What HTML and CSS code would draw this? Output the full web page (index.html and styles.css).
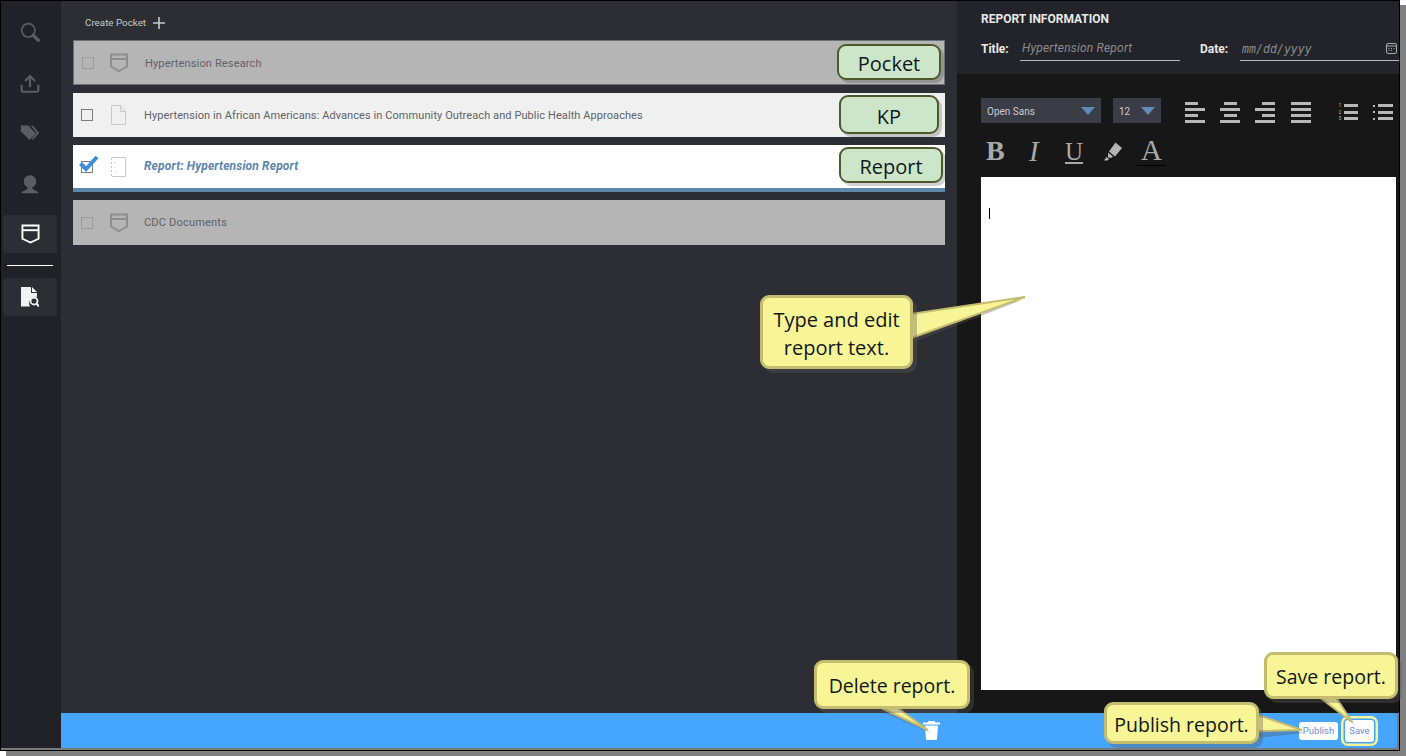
FILE: index.html

```html
<!DOCTYPE html>
<html lang="en">
<head>
  <meta charset="UTF-8" />
  <meta name="viewport" content="width=device-width, initial-scale=1" />
  <title>Report Information</title>
  <link rel="stylesheet" href="styles.css">
</head>
<body>
  <div class="window">
    <nav class="sidebar">
      <a class="nav-item">
        <svg width="20" height="20" viewBox="0 0 24 24" fill="none" stroke="#5a5d63"><circle cx="10" cy="10" r="8" stroke-width="2"/><path d="M16 16 22 22" stroke-width="4" stroke-linecap="round"/></svg>
      </a>
      <a class="nav-item">
        <svg width="20" height="20" viewBox="0 0 24 24" fill="none" stroke="#5a5d63" stroke-width="2.6"><path d="M12 17V4M6 9.500 12 3.500 18 9.500"/><path d="M2 14v7a1.500 1.500 0 0 0 1.500 1.500h17A1.500 1.500 0 0 0 22 21v-7"/></svg>
      </a>
      <a class="nav-item">
        <svg width="20" height="20" viewBox="0 0 24 24" fill="#5a5d63"><path d="M1 3h9l9 9.500-7.500 8L1 10z"/><path d="M13 3h2.500L23 12l-7.500 8.500-1.500-1.500 6-7z"/></svg>
      </a>
      <a class="nav-item">
        <svg width="20" height="20" viewBox="0 0 24 24" fill="#5a5d63"><circle cx="12" cy="9" r="7.500"/><path d="M9 15h6v3l7 3.500V23H2v-1.500l7-3.500z"/></svg>
      </a>
      <a class="nav-item active">
        <svg width="19" height="20" viewBox="0 0 20 21" fill="none" stroke="#fff" stroke-width="2"><path d="M1.500 1.500h17v14L10 19.500 1.500 15.500z"/><path d="M1.500 6.500h17"/></svg>
      </a>
      <div class="nav-rule"></div>
      <a class="nav-item active">
        <svg width="18" height="20" viewBox="0 0 18 20"><path d="M0 0h10v6h6v4a6.500 6.500 0 0 0-7 9.500H0z" fill="#f2f2f2"/><path d="M11 0l5 5h-5z" fill="#f2f2f2"/><circle cx="13" cy="14" r="3.500" fill="none" stroke="#f2f2f2" stroke-width="1.800"/><path d="M15.500 16.500 18 19.500" stroke="#f2f2f2" stroke-width="2"/></svg>
      </a>
    </nav>

    <div class="main">
      <div class="panels">
        <section class="list-panel">
          <div class="create-pocket">
            <span>Create Pocket</span>
            <svg width="12" height="12" viewBox="0 0 12 12" stroke="#c8c9cb" stroke-width="1.600"><path d="M6 0v12M0 6h12"/></svg>
          </div>

          <div class="row row-pocket row-first">
            <span class="check"></span>
            <svg class="row-icon" width="20" height="20" viewBox="0 0 20 20" fill="none" stroke="#8e8e8e" stroke-width="2"><path d="M2 1.500h16v12L10 18 2 13.500z"/><path d="M2 6h16"/></svg>
            <span class="row-title">Hypertension Research</span>
          </div>

          <div class="row row-kp">
            <span class="check"></span>
            <svg class="row-icon" width="17" height="20" viewBox="0 0 17 20" fill="none" stroke="#c9c9c9"><path d="M1.500.500h9l5 6v13h-14z"/><path d="M10.500.500v6h5"/></svg>
            <span class="row-title">Hypertension in African Americans: Advances in Community Outreach and Public Health Approaches</span>
          </div>

          <div class="row row-report">
            <span class="check">
              <svg class="tick" width="20" height="18" viewBox="0 0 20 18" fill="none" stroke="#3d8fdc" stroke-width="4"><path d="M1.500 8.500 7 14 18 2"/></svg>
            </span>
            <svg class="row-icon" width="17" height="20" viewBox="0 0 17 20" fill="none" stroke="#c9c9c9"><path d="M2 .500h13.500v19H2"/><path d="M1.500 1v18M5 5v1M5 10v1M5 15v1" stroke-dasharray="2 2"/></svg>
            <span class="row-title">Report: Hypertension Report</span>
          </div>

          <div class="row row-pocket">
            <span class="check"></span>
            <svg class="row-icon" width="20" height="20" viewBox="0 0 20 20" fill="none" stroke="#8e8e8e" stroke-width="2"><path d="M2 1.500h16v12L10 18 2 13.500z"/><path d="M2 6h16"/></svg>
            <span class="row-title">CDC Documents</span>
          </div>
        </section>

        <section class="report-panel">
          <header class="report-info">
            <h3>REPORT INFORMATION</h3>
            <div class="info-fields">
              <label class="field-label">Title:</label>
              <div class="field field-title">Hypertension Report</div>
              <label class="field-label date-label">Date:</label>
              <div class="field field-date">
                <span>mm/dd/yyyy</span>
                <svg width="11" height="11" viewBox="0 0 11 11" fill="none" stroke="#a9a9a9"><rect x=".5" y=".5" width="10" height="10" rx="1.500"/><path d="M.5 3h10M2.500 5.500h1M5 5.500h1M7.500 5.500h1M2.500 7.500h1M5 7.500h1"/></svg>
              </div>
            </div>
          </header>

          <div class="editor">
            <div class="toolbar">
              <div class="select select-font">Open Sans<i class="caret"></i></div>
              <div class="select select-size">12<i class="caret"></i></div>
              <div class="align-group">
                <span class="align align-left"><b></b><b></b><b></b><b></b></span>
                <span class="align align-center"><b></b><b></b><b></b><b></b></span>
                <span class="align align-right"><b></b><b></b><b></b><b></b></span>
                <span class="align align-justify"><b></b><b></b><b></b><b></b></span>
              </div>
              <div class="list-group">
                <span class="list-btn">
                  <span class="list-line"><em>1</em><b></b></span>
                  <span class="list-line"><em>2</em><b></b></span>
                  <span class="list-line"><em>3</em><b></b></span>
                </span>
                <span class="list-btn list-bullets">
                  <span class="list-line"><i></i><b></b></span>
                  <span class="list-line"><i></i><b></b></span>
                  <span class="list-line"><i></i><b></b></span>
                </span>
              </div>
            </div>
            <div class="format-bar">
              <span class="fmt fmt-b">B</span>
              <span class="fmt fmt-i">I</span>
              <span class="fmt fmt-u">U</span>
              <svg class="fmt-pen" width="20" height="20" viewBox="0 0 20 20" fill="#b5b5b5"><path d="M12.500 1.500 19 7l-7 8.500-6-5z"/><path d="M5 11.500l5 4-2 1.500-3-.5zM3.500 16l2.500 2-1.500 1.500H1z"/></svg>
              <span class="fmt fmt-a">A</span>
            </div>
            <div class="page"><i class="text-cursor"></i></div>
          </div>
        </section>
      </div>

      <footer class="action-bar">
        <svg class="trash" width="17" height="19" viewBox="0 0 17 19" fill="#fff"><path d="M5.500 0h6l1 1.500H17v2H0v-2h4.500zM2 4.500h13l-1 13.500a1 1 0 0 1-1 1H4a1 1 0 0 1-1-1z"/></svg>
        <button class="btn">Publish</button>
        <button class="btn btn-save">Save</button>
      </footer>
    </div>
  </div>

  <div class="tag tag-pocket">Pocket</div>
  <div class="tag tag-kp">KP</div>
  <div class="tag tag-report">Report</div>

  <svg class="tails" width="1406" height="756" viewBox="0 0 1406 756">
    <g class="tail-shade">
      <path d="M914 317 1022 300 914 342z"/>
      <path d="M880 711 931 733 899 711z"/>
      <path d="M1258 720 1304 733 1258 738z"/>
      <path d="M1322 701 1355 725 1339 701z"/>
    </g>
    <g class="tail-fill">
      <path d="M911 314 1025 297 911 338z"/>
      <path d="M877 706 928 730 895 706z"/>
      <path d="M1255 714 1302 730 1255 731z"/>
      <path d="M1318 696 1352 722 1335 696z"/>
    </g>
  </svg>

  <div class="callout callout-edit">Type and edit<br>report text.</div>
  <div class="callout callout-delete">Delete report.</div>
  <div class="callout callout-publish">Publish report.</div>
  <div class="callout callout-save">Save report.</div>
</body>
</html>
```

FILE: styles.css

```css
* {
  box-sizing: border-box;
}
body {
  margin: 0;
  width: 1406px;
  height: 756px;
  overflow: hidden;
  background: white;
  font-family: Roboto, "Liberation Sans", sans-serif;
  position: relative;
}
.window {
  display: flex;
  width: 1400px;
  height: 751px;
  border: 1px solid #000;
  padding-bottom: 2px;
  box-shadow: 6px 5px 0 #808080;
  background: #7a7a7a;
}

/* sidebar */
.sidebar {
  width: 60px;
  flex: none;
  background: #212227;
  display: flex;
  flex-direction: column;
  align-items: center;
  padding: 12px 2px 0 0;
}
.nav-item {
  width: 54px;
  height: 38px;
  margin-bottom: 12.500px;
  display: flex;
  align-items: center;
  justify-content: center;
  border-radius: 3px;
}
.nav-item.active {
  background: #2c2e34;
  margin-bottom: 0;
}
.nav-rule {
  width: 46px;
  height: 1px;
  background: #fff;
  margin: 12px 0;
}

/* main area */
.main {
  flex: 1;
  display: flex;
  flex-direction: column;
  min-width: 0;
}
.panels {
  flex: 1;
  display: flex;
  min-height: 0;
  background: #2c2e34;
}
.list-panel {
  width: 896px;
  padding: 0 12px;
}
.create-pocket {
  height: 39px;
  padding: 4px 0 0 12px;
  display: flex;
  align-items: center;
  gap: 7px;
  color: #c8c9cb;
  font-size: 9.800px;
}
.row {
  height: 44px;
  margin-bottom: 8px;
  display: flex;
  align-items: center;
  position: relative;
  font-size: 11px;
  color: #5f6268;
}
.row-pocket {
  background: #b5b5b5;
  height: 45px;
}
.row-first {
  border: 1px solid #6d7076;
}
.row-kp {
  background: #f0f0f0;
}
.row-kp .row-title {
  letter-spacing: .08px;
}
.row-report {
  background: #fff;
  border-bottom: 4px solid #5f86ab;
  height: 47px;
}
.row-report .row-title {
  color: #5c86ae;
  font-style: italic;
  font-weight: bold;
  font-size: 12px;
  padding-bottom: 2px;
}
.check {
  width: 12px;
  height: 12px;
  margin-left: 8px;
  border: 1px solid #7b7b7b;
  position: relative;
  flex: none;
}
.row-pocket .check {
  border-color: #9a9a9a;
}
.tick {
  position: absolute;
  left: -3px;
  top: -7px;
}
.row-icon {
  margin-left: 17px;
  flex: none;
}
.row-title {
  margin-left: 17px;
  letter-spacing: .15px;
}
.row-pocket .row-icon {
  margin-left: 16px;
}
.row-pocket .row-title {
  margin-left: 15px;
  letter-spacing: .2px;
}
.row-first .row-icon {
  margin-left: 15px;
}
.row-first .row-title {
  margin-left: 16px;
  letter-spacing: .15px;
  padding-top: 1px;
}

/* report panel */
.report-panel {
  flex: 1;
  display: flex;
  flex-direction: column;
  min-width: 0;
  background: #171717;
}
.report-info {
  height: 73px;
  flex: none;
  background: #22242a;
  padding: 11px 0 0 24px;
}
.report-info h3 {
  margin: 0;
  font-size: 12px;
  line-height: 14px;
  font-weight: bold;
  color: #e8e8e8;
}
.info-fields {
  display: flex;
  align-items: flex-start;
  margin-top: 10px;
}
.field-label {
  font-size: 12px;
  font-weight: bold;
  color: #e8e8e8;
  padding-top: 6px;
  width: 39px;
}
.date-label {
  margin-left: 20px;
  width: 40px;
}
.field {
  height: 25px;
  border-bottom: 1px solid #b9b9b9;
  color: #8b8b8b;
  font-style: italic;
  font-size: 12px;
  letter-spacing: .2px;
  padding: 5px 0 0 2px;
}
.field-title {
  width: 160px;
}
.field-date {
  width: 159px;
  font-family: "DejaVu Sans Mono", monospace;
  font-size: 11.600px;
  letter-spacing: 0;
  padding-top: 6px;
  display: flex;
  justify-content: space-between;
}
.field-date svg {
  margin: 1px 2px 0 0;
}

/* editor */
.editor {
  flex: 1;
  padding: 24px 3px 23px 24px;
  display: flex;
  flex-direction: column;
}
.toolbar {
  display: flex;
  align-items: flex-start;
  height: 25px;
}
.select {
  height: 25px;
  background: #3a3d45;
  color: #c9cacc;
  font-size: 10px;
  display: flex;
  align-items: center;
  justify-content: space-between;
  padding: 1px 6px 0;
}
.select-font {
  width: 120px;
}
.select-size {
  width: 48px;
  margin-left: 12px;
}
.caret {
  width: 0;
  height: 0;
  border-left: 7.500px solid transparent;
  border-right: 7.500px solid transparent;
  border-top: 8px solid #5f8db8;
}
.align-group {
  display: flex;
  margin-left: 24px;
  gap: 15.200px;
  padding-top: 4px;
}
.align {
  width: 20px;
  display: flex;
  flex-direction: column;
  gap: 3px;
}
.align b {
  display: block;
  height: 3px;
  background: #b8b8b8;
}
.align b:nth-child(odd) {
  width: 13px;
}
.align b:nth-child(even) {
  width: 20px;
}
.align-center {
  align-items: center;
}
.align-right {
  align-items: flex-end;
}
.align-justify b:nth-child(odd) {
  width: 20px;
}
.list-group {
  display: flex;
  margin-left: 28px;
  gap: 15px;
  padding-top: 6px;
}
.list-btn {
  width: 19px;
  display: flex;
  flex-direction: column;
  gap: 3.500px;
}
.list-bullets {
  width: 20px;
}
.list-line {
  display: flex;
  align-items: center;
  justify-content: space-between;
  height: 3px;
}
.list-line b {
  display: block;
  width: 14px;
  height: 3px;
  background: #b8b8b8;
}
.list-bullets .list-line b {
  width: 15px;
}
.list-line em {
  font-style: normal;
  font-size: 5px;
  line-height: 3px;
  color: #b8b8b8;
}
.list-line i {
  width: 2px;
  height: 2px;
  background: #b8b8b8;
}
.format-bar {
  display: flex;
  align-items: center;
  height: 42px;
  margin-top: 7px;
  padding-left: 5px;
  color: #a9a9a9;
  font-family: "Liberation Serif", serif;
}
.fmt {
  font-size: 28px;
  line-height: 1;
}
.fmt-b {
  font-weight: bold;
  width: 43px;
}
.fmt-i {
  font-style: italic;
  width: 36px;
  font-size: 29px;
}
.fmt-u {
  width: 38px;
  font-size: 25px;
  text-decoration: underline;
  text-underline-offset: 2px;
}
.fmt-pen {
  margin-right: 14px;
}
.fmt-a {
  font-size: 29px;
  border-bottom: 1px solid #000;
  padding: 0 4px;
}
.page {
  flex: 1;
  background: #fff;
  margin-top: 5px;
  padding: 31px 8px;
}
.text-cursor {
  display: block;
  width: 1px;
  height: 11px;
  background: #000;
}

/* footer */
.action-bar {
  height: 35px;
  flex: none;
  margin-right: 2px;
  background: #46a5ff;
  display: flex;
  align-items: center;
  position: relative;
  padding-right: 23px;
  justify-content: flex-end;
  gap: 7px;
}
.trash {
  position: absolute;
  left: 862px;
  top: 8px;
}
.btn {
  height: 18px;
  padding: 0;
  border: none;
  background: #fff;
  border-radius: 3px;
  color: #6b8fd6;
  font-family: Roboto, sans-serif;
  font-size: 9.500px;
  width: 39px;
}
.btn-save {
  width: 29px;
  height: 22px;
  box-shadow: 0 0 0 1.500px #46a5ff, 0 0 0 4px #f7f596;
}

/* annotations */
.tag {
  position: absolute;
  display: flex;
  align-items: center;
  justify-content: center;
  background: #cde6c9;
  border: 2px solid #4f5a2c;
  border-radius: 9px;
  box-shadow: 3px 3px 0 rgba(0,0,0,.18);
  font-family: "Open Sans", sans-serif;
  font-size: 20px;
  color: #10181c;
  padding-top: 2px;
}
.tag-pocket {
  left: 837px;
  top: 44px;
  width: 104px;
  height: 36px;
}
.tag-kp {
  left: 839px;
  top: 95px;
  width: 100px;
  height: 39px;
  padding-top: 4px;
}
.tag-report {
  left: 839px;
  top: 147px;
  width: 104px;
  height: 36px;
}
.tails {
  position: absolute;
  left: 0;
  top: 0;
}
.tail-shade path {
  fill: rgba(90,90,90,.35);
}
.tail-fill path {
  fill: #f7f596;
  stroke: #c4bc6e;
  stroke-width: 2;
}
.callout {
  position: absolute;
  background: #f7f596;
  border: 3px solid #c4bc6e;
  border-radius: 9px;
  box-shadow: 4px 4px 0 rgba(90,90,90,.35);
  font-family: "Open Sans", sans-serif;
  font-size: 19.500px;
  line-height: 28px;
  color: #10181c;
  text-align: center;
  display: flex;
  align-items: center;
  justify-content: center;
}
.callout-edit {
  left: 760px;
  top: 295px;
  width: 153px;
  height: 74px;
  padding-top: 4px;
  font-size: 20px;
}
.callout-delete {
  left: 814px;
  top: 660px;
  width: 156px;
  height: 49px;
  padding-top: 2px;
}
.callout-publish {
  left: 1104px;
  top: 702px;
  width: 155px;
  height: 42px;
  padding-top: 4px;
}
.callout-save {
  left: 1264px;
  top: 652px;
  width: 134px;
  height: 47px;
  padding-top: 2px;
}
```
